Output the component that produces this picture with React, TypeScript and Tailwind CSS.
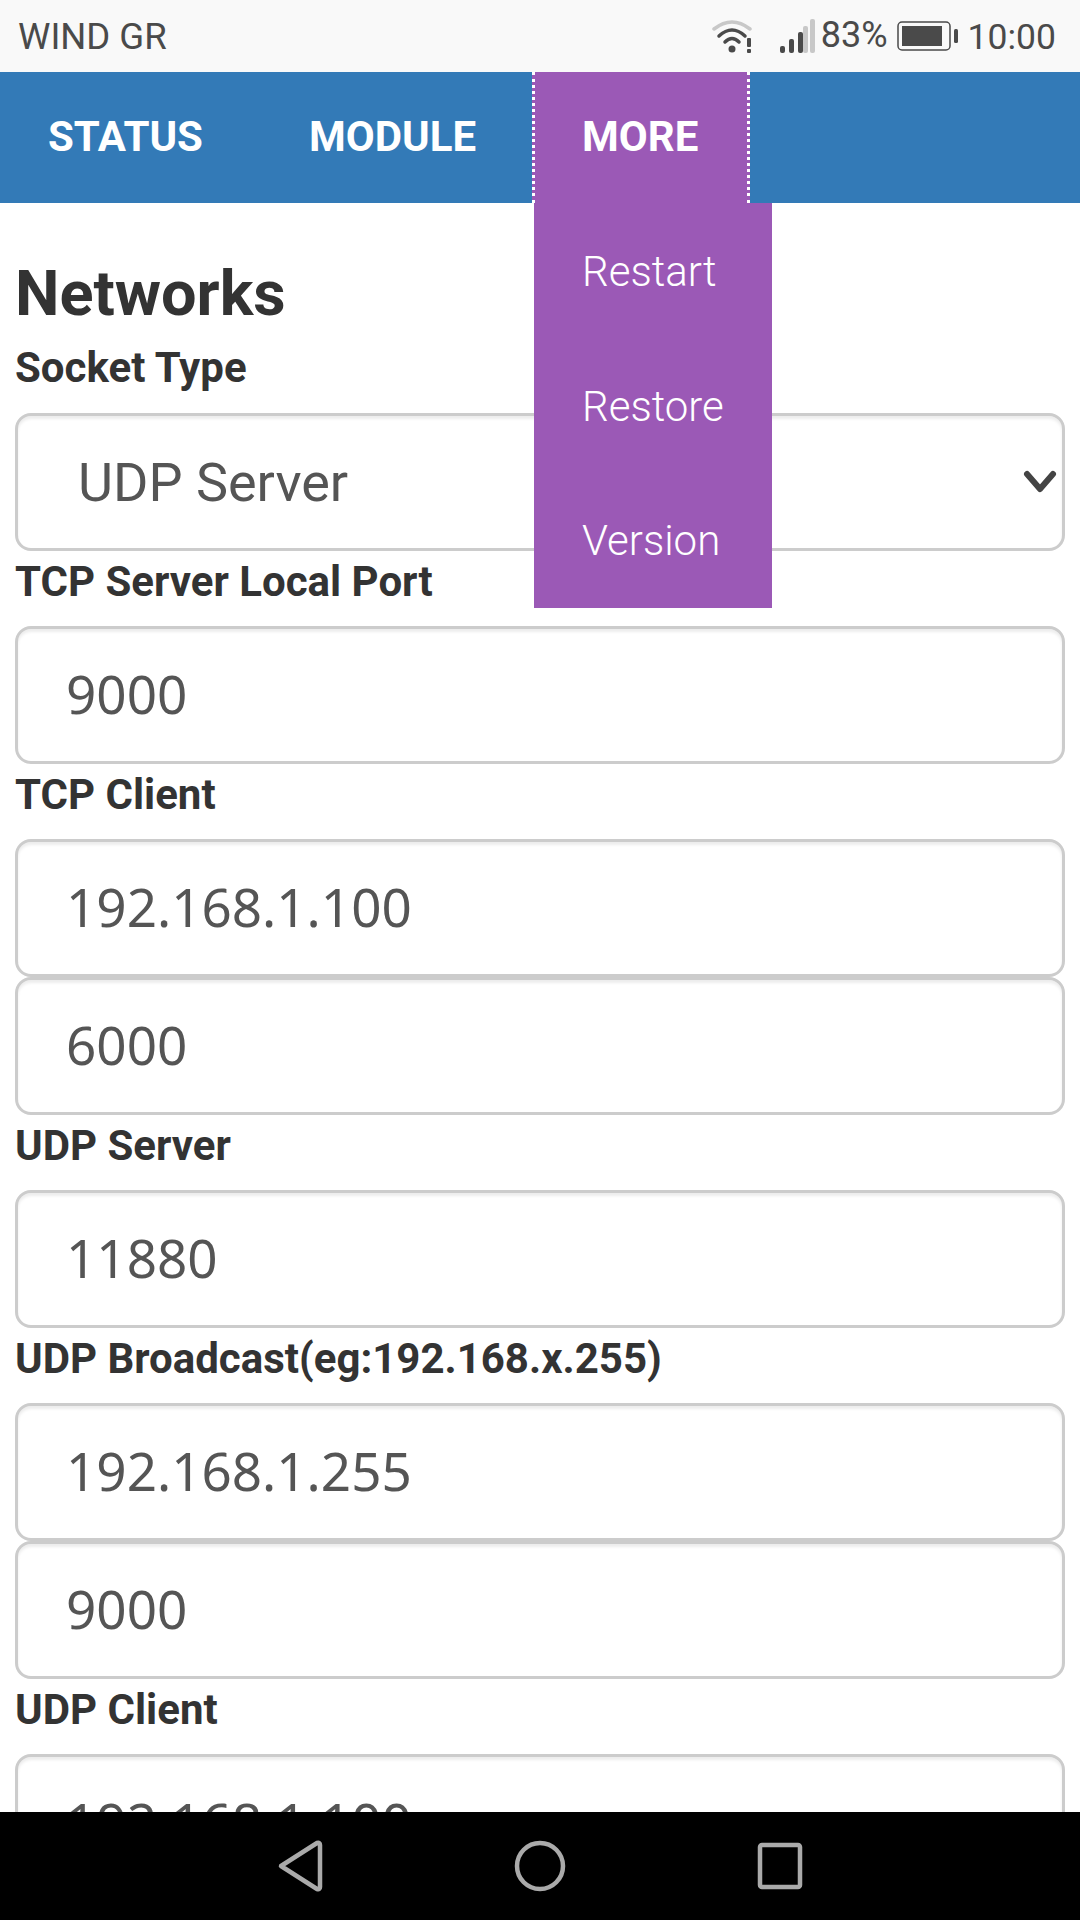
const roboto = "font-['Roboto',sans-serif]";

const Field = ({ value }: { value: string }) => (
  <div className="h-[138px] pb-[2px] flex items-center pl-[48px] border-[3px] border-[#ccc] rounded-[16px] bg-white shadow-[inset_0_3px_3px_rgba(0,0,0,0.075)] text-[53px] text-[#555] font-['Noto_Sans',sans-serif] shrink-0">
    {value}
  </div>
);

const Label = ({ text }: { text: string }) => (
  <div className={`h-[75px] pb-[14px] flex items-center text-[42px] font-bold text-[#333] leading-none shrink-0 ${roboto}`}>
    {text}
  </div>
);

const StatusBar = () => (
  <div className={`h-[72px] shrink-0 bg-[#f9f9f9] flex items-center justify-between pl-[18px] pr-[24px] pt-[3px] text-[#4a4a4a] ${roboto}`}>
    <span className="text-[36.5px]">WIND GR</span>
    <div className="flex items-center -mt-[3px]">
      <svg width="42" height="36" viewBox="0 0 42 36" className="mr-[26px]">
        <path d="M2 11 Q20 -3 38 11" fill="none" stroke="#c8c8c8" strokeWidth="3.5" strokeLinecap="round" />
        <path d="M7 18 Q20 6 33 18" fill="none" stroke="#4a4a4a" strokeWidth="3.5" strokeLinecap="round" />
        <path d="M13 24 Q20 17 27 24" fill="none" stroke="#4a4a4a" strokeWidth="3.5" strokeLinecap="round" />
        <circle cx="20" cy="31" r="3.5" fill="#4a4a4a" />
        <rect x="35" y="20" width="4" height="9" rx="1" fill="#4a4a4a" />
        <rect x="35" y="31" width="4" height="4" rx="1" fill="#4a4a4a" />
      </svg>
      <svg width="36" height="34" viewBox="0 0 36 34">
        <rect x="0" y="27" width="5" height="7" rx="2" fill="#4a4a4a" />
        <rect x="9" y="20" width="5" height="14" rx="2" fill="#4a4a4a" />
        <rect x="18" y="13" width="5" height="21" rx="2" fill="#4a4a4a" />
        <rect x="23" y="7" width="5" height="27" rx="2" fill="#c8c8c8" />
        <rect x="30" y="0" width="5" height="34" rx="2" fill="#c8c8c8" />
      </svg>
      <span className="text-[36px] ml-[5px] mr-[9px] -mt-[2px]">83%</span>
      <svg width="62" height="30" viewBox="0 0 62 30" className="mr-[9px]">
        <rect x="1" y="1" width="52" height="28" rx="4" fill="none" stroke="#4a4a4a" strokeWidth="1.5" />
        <rect x="5" y="5" width="40" height="20" fill="#4a4a4a" />
        <rect x="57" y="8" width="4" height="14" rx="1.5" fill="#4a4a4a" />
      </svg>
      <span className="text-[35.5px] mt-[3px]">10:00</span>
    </div>
  </div>
);

const NavBar = () => (
  <div className={`h-[131px] shrink-0 bg-[#337ab7] flex text-white text-[42px] font-bold relative ${roboto}`}>
    <div className="w-[268px] pl-[48px] pb-[3px] flex items-center">STATUS</div>
    <div className="w-[264px] pl-[41px] pb-[3px] flex items-center">MODULE</div>
    <div className="w-[218px] pl-[47px] pb-[3px] flex items-center bg-[#9b59b6] border-x-[3px] border-dotted border-white">MORE</div>
    <div className="absolute left-[534px] top-[131px] w-[238px] h-[405px] bg-[#9b59b6] z-10 pt-[1px] flex flex-col font-light text-[42px]">
      {["Restart", "Restore", "Version"].map((item) => (
        <div key={item} className="h-[135px] pl-[48px] flex items-center">{item}</div>
      ))}
    </div>
  </div>
);

const NavKeys = () => (
  <div className="h-[108px] shrink-0 bg-black flex items-center justify-center">
    <svg width="530" height="60" viewBox="0 0 530 60" fill="none" stroke="#aaa" strokeWidth="4.5" strokeLinejoin="round">
      <path d="M6 30 L42 7 Q45 6 45 9 L45 51 Q45 54 42 53 Z" />
      <ellipse cx="265" cy="30" rx="23" ry="23" />
      <rect x="485" y="9" width="40" height="42" rx="2" />
    </svg>
  </div>
);

export default function App() {
  return (
    <div className="w-[1080px] h-[1920px] flex flex-col overflow-hidden bg-white">
      <StatusBar />
      <NavBar />
      <div className="flex-1 min-h-0 overflow-hidden px-[15px]">
        <h3 className={`mt-[51px] h-[78px] flex items-center text-[63px] font-bold text-[#333] leading-none ${roboto}`}>Networks</h3>
        <div className={`h-[51px] mt-[10px] flex items-center text-[42px] font-bold text-[#333] leading-none ${roboto}`}>Socket Type</div>
        <div className={`h-[138px] mt-[20px] flex items-center justify-between pl-[60px] pr-[5px] border-[3px] border-[#ccc] rounded-[16px] text-[54px] text-[#555] shadow-[inset_0_3px_3px_rgba(0,0,0,0.075)] ${roboto}`}>
          <span>UDP Server</span>
          <svg width="34" height="24" viewBox="0 0 34 24" fill="none" stroke="#444" strokeWidth="6" strokeLinecap="round" strokeLinejoin="round">
            <path d="M4 4 L17 19 L30 4" />
          </svg>
        </div>
        <Label text="TCP Server Local Port" />
        <Field value="9000" />
        <Label text="TCP Client" />
        <Field value="192.168.1.100" />
        <Field value="6000" />
        <Label text="UDP Server" />
        <Field value="11880" />
        <Label text="UDP Broadcast(eg:192.168.x.255)" />
        <Field value="192.168.1.255" />
        <Field value="9000" />
        <Label text="UDP Client" />
        <Field value="192.168.1.100" />
      </div>
      <NavKeys />
    </div>
  );
}
